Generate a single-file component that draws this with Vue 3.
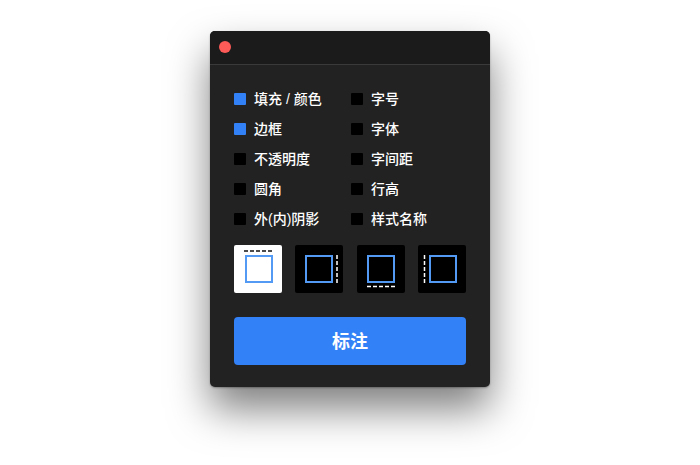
<template>
  <div class="page">
    <div class="panel">
      <div class="titlebar">
        <span class="close-dot"></span>
      </div>
      <div class="content">
        <div class="options">
          <label v-for="opt in options" :key="opt.name" class="option">
            <span class="check" :class="{ on: opt.on }"></span>
            <span class="name">{{ opt.name }}</span>
          </label>
        </div>
        <div class="sides">
          <button
            v-for="side in sides"
            :key="side"
            class="side-btn"
            :class="[side, { active: side === activeSide }]"
            @click="activeSide = side"
          >
            <svg width="48" height="48" viewBox="0 0 48 48">
              <rect class="box" :x="boxPos[side][0]" :y="boxPos[side][1]" width="26" height="26" />
              <line class="dash" v-bind="dashPos[side]" />
            </svg>
          </button>
        </div>
        <button class="mark-btn"><span>标注</span></button>
      </div>
    </div>
  </div>
</template>

<script setup>
import { ref } from 'vue'

const options = [
  { name: '填充 / 颜色', on: true },
  { name: '字号', on: false },
  { name: '边框', on: true },
  { name: '字体', on: false },
  { name: '不透明度', on: false },
  { name: '字间距', on: false },
  { name: '圆角', on: false },
  { name: '行高', on: false },
  { name: '外(内)阴影', on: false },
  { name: '样式名称', on: false },
]

const sides = ['top', 'right', 'bottom', 'left']
const activeSide = ref('top')

// 方框和虚线的位置
const boxPos = {
  top: [12, 11],
  right: [11, 11],
  bottom: [11, 11],
  left: [12, 11],
}
const dashPos = {
  top: { x1: 10, y1: 6, x2: 39, y2: 6 },
  right: { x1: 42, y1: 10, x2: 42, y2: 39 },
  bottom: { x1: 10, y1: 41.5, x2: 39, y2: 41.5 },
  left: { x1: 6.5, y1: 10, x2: 6.5, y2: 39 },
}
</script>

<style>
html,
body {
  margin: 0;
  background: #fff;
}
</style>

<style scoped>
.page {
  width: 700px;
  height: 465px;
  padding-top: 31px;
  box-sizing: border-box;
  overflow: hidden;
  font-family: "Liberation Sans", "Noto Sans CJK SC", sans-serif;
}

.panel {
  width: 280px;
  height: 356px;
  margin: 0 auto;
  background: #222;
  border-radius: 5px;
  box-shadow: 0 22px 40px rgba(0, 0, 0, 0.5), 0 1px 2px rgba(0, 0, 0, 0.3);
}

.titlebar {
  height: 33px;
  display: flex;
  align-items: center;
  padding-left: 9px;
  background: #1b1b1b;
  border-bottom: 1px solid #3a3a3a;
  border-radius: 5px 5px 0 0;
}

.close-dot {
  width: 12px;
  height: 12px;
  margin-top: -2px;
  border-radius: 50%;
  background: #fc5b57;
}

.content {
  padding: 19px 24px 0;
}

.options {
  display: grid;
  grid-template-columns: 117px 1fr;
  grid-auto-rows: 30px;
}

.option {
  display: flex;
  align-items: center;
  gap: 8px;
  color: #fff;
  font-size: 14px;
  font-weight: 500;
}

.name {
  padding-bottom: 2px;
}

.check {
  width: 12px;
  height: 12px;
  background: #000;
  border-radius: 1px;
}

.check.on {
  background: #3381f6;
}

.sides {
  display: flex;
  justify-content: space-between;
  margin-top: 11px;
}

.side-btn {
  width: 48px;
  height: 48px;
  padding: 0;
  border: none;
  border-radius: 2px;
  background: #000;
  cursor: pointer;
}

.side-btn svg {
  display: block;
}

.box {
  fill: none;
  stroke: #539af5;
  stroke-width: 2;
}

.dash {
  stroke: #fff;
  stroke-width: 1.5;
  stroke-dasharray: 4 2;
}

.side-btn.active {
  background: #fff;
}

.side-btn.active .dash {
  stroke: #111;
}

.mark-btn {
  display: block;
  width: 100%;
  height: 48px;
  margin-top: 24px;
  padding: 0 0 3px;
  border: none;
  border-radius: 4px;
  background: #3381f6;
  color: #fff;
  font-family: inherit;
  font-size: 18px;
  font-weight: 700;
  cursor: pointer;
}
</style>
